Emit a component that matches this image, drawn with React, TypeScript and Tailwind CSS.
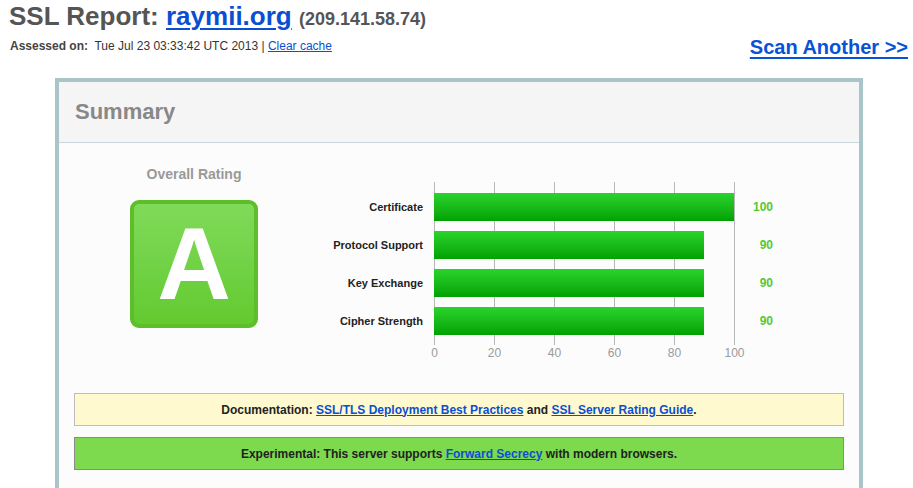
import React from "react";

const bars = [
  { label: "Certificate", value: 100 },
  { label: "Protocol Support", value: 90 },
  { label: "Key Exchange", value: 90 },
  { label: "Cipher Strength", value: 90 },
];

const ticks = [0, 20, 40, 60, 80, 100];

export default function App() {
  return (
    <div className="w-[913px] h-[488px] overflow-hidden bg-white font-['Liberation_Sans',Arial,sans-serif]">
      <h1 className="pl-[9px] h-[32px] text-[26px] leading-[32px] font-bold text-[#555] whitespace-nowrap">
        SSL Report:{" "}
        <a href="#" className="text-[#0a4fd2] underline decoration-2 underline-offset-[3px]">raymii.org</a>{" "}
        <span className="text-[18px] text-[#555]">(209.141.58.74)</span>
      </h1>
      <div className="flex h-[28px] items-center justify-between pl-[10px] pr-[5px]">
        <div className="text-[12px] leading-[16px] text-[#333]">
          <span className="font-bold text-[#444]">Assessed on:</span>
          &nbsp; Tue Jul 23 03:33:42 UTC 2013 |{" "}
          <a href="#" className="text-[#0a4fd2] underline">Clear cache</a>
        </div>
        <a href="#" className="mt-[2px] text-[20px] leading-[24px] font-bold text-[#0a52d4] underline decoration-2 underline-offset-[3px]">
          Scan Another &gt;&gt;
        </a>
      </div>

      <div className="ml-[55px] mt-[18px] w-[808px] border-4 border-[#a9c5c9] bg-[#fcfcfc]">
        <div className="h-[61px] border-b border-[#c8d7d9] bg-[#f5f5f5] pl-[16px] pt-[17px]">
          <h2 className="text-[22px] leading-[26px] font-bold text-[#888]">Summary</h2>
        </div>

        <div className="flex">
          <div className="flex w-[270px] flex-col items-center pt-[23px]">
            <div className="text-[14px] leading-[16px] font-bold text-[#999]">Overall Rating</div>
            <div className="mt-[18px] flex h-[128px] w-[128px] items-center justify-center rounded-[9px] border-4 border-[#5cbe29] bg-linear-to-b from-[#80da59] to-[#63ca2f]">
              <span className="text-[102px] leading-none font-bold text-white">A</span>
            </div>
          </div>

          <div className="pt-[39px]">
            <div className="flex">
              <div className="flex w-[94px] flex-col pt-[11px] gap-[10px]">
                {bars.map((b) => (
                  <div key={b.label} className="flex h-[28px] items-center justify-end text-[11px] font-bold text-[#222] whitespace-nowrap">
                    {b.label}
                  </div>
                ))}
              </div>
              <div className="ml-[11px] w-[301px]">
                <div className="relative h-[163px]">
                  {ticks.map((t) => (
                    <div
                      key={t}
                      className="absolute top-0 bottom-0 w-px bg-[#b8b8b8]"
                      style={{ left: t * 3 }}
                    />
                  ))}
                  <div className="relative flex flex-col gap-[10px] pt-[11px]">
                    {bars.map((b) => (
                      <div
                        key={b.label}
                        className="h-[28px] bg-linear-to-b from-[#2ad42c] to-[#00a200]"
                        style={{ width: b.value * 3 }}
                      />
                    ))}
                  </div>
                </div>
                <div className="relative mt-[1px] h-[14px] text-[12px] leading-[14px] text-[#9a9a9a]">
                  {ticks.map((t) => (
                    <span
                      key={t}
                      className="absolute top-0 -translate-x-1/2"
                      style={{ left: t * 3 + 0.5 }}
                    >
                      {t}
                    </span>
                  ))}
                </div>
              </div>
              <div className="flex w-[38px] flex-col pt-[11px] gap-[10px]">
                {bars.map((b) => (
                  <div key={b.label} className="flex h-[28px] items-center justify-end text-[12px] font-bold text-[#55c833]">
                    {b.value}
                  </div>
                ))}
              </div>
            </div>
          </div>
        </div>

        <div className="mx-[15px] mt-[33px] flex flex-col gap-[11px] pb-[40px]">
          <div className="flex h-[33px] items-center justify-center border border-[#bdbdbd] bg-[#fff9d0] text-[12px] font-bold text-[#222]">
            Documentation:&nbsp;
            <a href="#" className="text-[#0a4fd2] underline">SSL/TLS Deployment Best Practices</a>
            &nbsp;and&nbsp;
            <a href="#" className="text-[#0a4fd2] underline">SSL Server Rating Guide</a>.
          </div>
          <div className="flex h-[33px] items-center justify-center border border-[#8a8a8a] bg-[#7dd94e] text-[12px] font-bold text-[#222]">
            Experimental: This server supports&nbsp;
            <a href="#" className="text-[#0a4fd2] underline">Forward Secrecy</a>
            &nbsp;with modern browsers.
          </div>
        </div>
      </div>
    </div>
  );
}
